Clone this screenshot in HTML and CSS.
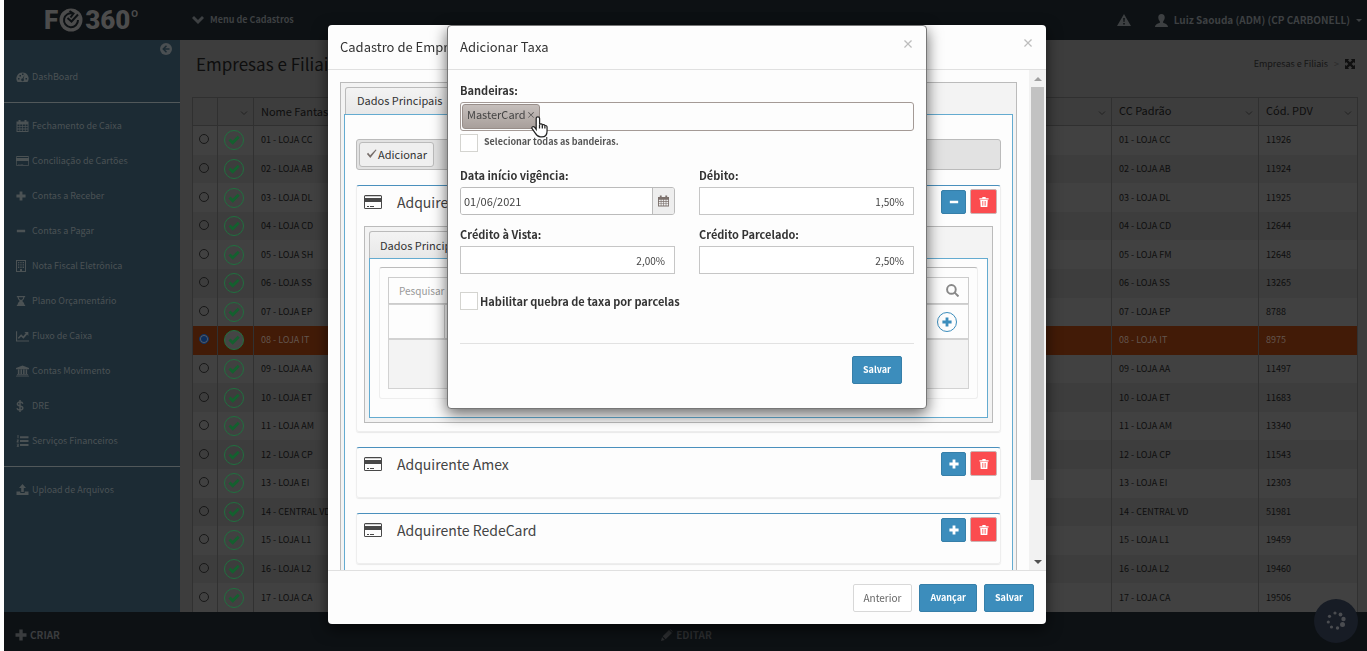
FILE: index.html
```html
<!DOCTYPE html>
<html lang="pt-BR">
<head>
<meta charset="utf-8">
<title>FC360º - Empresas e Filiais</title>
<link rel="stylesheet" href="styles.css">
</head>
<body>
<svg class="sprite" aria-hidden="true">
  <symbol id="i-card" viewBox="0 0 18 14"><path fill-rule="evenodd" d="M1.500 0h15A1.500 1.500 0 0 1 18 1.500v11a1.500 1.500 0 0 1-1.500 1.500h-15A1.500 1.500 0 0 1 0 12.500v-11A1.500 1.500 0 0 1 1.500 0zM1 1.300v1.700h16V1.300zM1 7v6h16V7zM3 11h2v1H3zm3 0h4v1H6z"/></symbol>
  <symbol id="i-plus" viewBox="0 0 12 12"><path d="M4.300.5h3.400v3.800h3.800v3.400H7.700v3.800H4.300V7.700H.5V4.300h3.800z"/></symbol>
  <symbol id="i-minus" viewBox="0 0 12 12"><path d="M1 4.500h10v3H1z"/></symbol>
  <symbol id="i-trash" viewBox="0 0 12 12"><path fill-rule="evenodd" d="M4 0h4v1.500h3.500V3H.5V1.500H4zM1.500 3.500h9L10 12H2zM3.800 4.800v5.700h.7V4.800zm1.900 0v5.700h.7V4.800zm1.900 0v5.700h.7V4.800z"/></symbol>
  <symbol id="i-check" viewBox="0 0 12 12"><path d="M.5 6.500 2.500 4.500l2.200 2.200L9.700 1.700l2 2-7 7z"/></symbol>
  <symbol id="i-calendar" viewBox="0 0 12 12"><path fill-rule="evenodd" d="M0 1.500h2V0h2v1.500h4V0h2v1.500h2V12H0zM1 4.500v1.700h2V4.500zm2.700 0v1.700h2V4.500zm2.700 0v1.700h2V4.500zm2.700 0v1.700h2V4.500zM1 7v1.600h2V7zm2.700 0v1.600h2V7zm2.700 0v1.600h2V7zm2.700 0v1.600h2V7zM1 9.400V11h2V9.400zm2.700 0V11h2V9.400zm2.700 0V11h2V9.400zm2.700 0V11h2V9.400z"/></symbol>
  <symbol id="i-chevron" viewBox="0 0 12 12"><path d="M0 4 2 2l4 4 4-4 2 2-6 6z"/></symbol>
  <symbol id="i-sort" viewBox="0 0 8 8"><path d="M1 2.500 4 5.500l3-3" fill="none" stroke="currentColor"/></symbol>
</svg>

<div class="shell">
  <header class="topbar">
    <a class="logo" href="#" aria-label="FC360º">
      <span>F</span>
      <svg class="logo-mark" viewBox="0 0 24 24"><circle cx="12" cy="12" r="11.500"/><path d="M14 5.500a7 7 0 1 0 5 6.500M8.500 10l4 3.500 6.500-7M10.500 3l4 2.500-3 4"/></svg>
      <span>360</span><span class="logo-degree">º</span>
    </a>
    <a class="menu-link" href="#"><svg class="icon"><use href="#i-chevron"/></svg>Menu de Cadastros</a>
    <div class="user">
      <svg class="icon alert" viewBox="0 0 14 12"><path fill-rule="evenodd" d="M7 0l7 12H0zM6.200 4h1.600l-.3 4h-1zM6.200 9h1.600v1.500H6.200z"/></svg>
      <a class="user-link" href="#"><svg class="icon" viewBox="0 0 12 12"><path d="M6 0c2 0 3 1.300 3 3.200C9 5 8 6 7.500 7v1c1 .7 4.500 1 4.500 4H0c0-3 3.500-3.300 4.500-4V7C4 6 3 5 3 3.200 3 1.300 4 0 6 0z"/></svg>Luiz Saouda (ADM) (CP CARBONELL)<span class="caret"></span></a>
    </div>
  </header>

  <div class="middle">
    <nav class="sidebar">
      <button class="collapse" aria-label="Recolher menu"><svg viewBox="0 0 12 12"><circle cx="6" cy="6" r="6"/><path d="M6.500 2.800 3.300 6l3.200 3.200M3.500 6h6"/></svg></button>
      <div class="nav-group first">
        <a href="#"><svg class="icon" viewBox="0 0 12 12"><path fill-rule="evenodd" d="M1 11A6 6 0 0 1 6 1.500 6 6 0 0 1 11 11zM1.500 7v1.500H3V7zM3 4v1.500h1.500V4zM5.500 2.500V4H7V2.500zM9 7v1.500h1.500V7zM8 4 6 7.500a1.300 1.300 0 1 0 1 .4z"/></svg>DashBoard</a>
      </div>
      <div class="nav-group">
        <a href="#"><svg class="icon"><use href="#i-calendar"/></svg>Fechamento de Caixa</a>
        <a href="#"><svg class="icon"><use href="#i-card"/></svg>Conciliação de Cartões</a>
        <a href="#"><svg class="icon small"><use href="#i-plus"/></svg>Contas a Receber</a>
        <a href="#"><svg class="icon small"><use href="#i-minus"/></svg>Contas a Pagar</a>
        <a href="#"><svg class="icon small" viewBox="0 0 10 12"><path fill-rule="evenodd" d="M0 0h10v12H0zM1 1v10h3V9h2v2h3V1zM2 2h1v1H2zm1.700 0h1v1h-1zm1.700 0h1v1h-1zM7 2h1v1H7zM2 3.700h1v1H2zm1.700 0h1v1h-1zm1.700 0h1v1h-1zm1.600 0h1v1H7zM2 5.400h1v1H2zm1.700 0h1v1h-1zm1.700 0h1v1h-1zm1.600 0h1v1H7zM2 7.100h1v1H2zm1.700 0h1v1h-1zm1.700 0h1v1h-1zm1.600 0h1v1H7z"/></svg>Nota Fiscal Eletrônica</a>
        <a href="#"><svg class="icon small" viewBox="0 0 12 12"><path fill-rule="evenodd" d="M1 0h10v1.500h-1C10 4 8.500 5 7.500 6c1 1 2.500 2 2.500 4.500h1V12H1v-1.500h1C2 8 3.500 7 4.500 6 3.500 5 2 4 2 1.500H1zM3.300 1.500C3.500 3 4 4 5 4.500h2c1-.5 1.500-1.500 1.700-3z"/></svg>Plano Orçamentário</a>
        <a href="#"><svg class="icon" viewBox="0 0 14 12"><path d="M0 1h1.200v9.800H14V12H0zM2 8l3.500-4 2.300 2.200L10.500 3 9 1.800h4.300V6L12 4.500 8 9 5.500 6.500 3 9.200z"/></svg>Fluxo de Caixa</a>
        <a href="#"><svg class="icon" viewBox="0 0 14 12"><path d="M7 0l7 2.800V4H0V2.800zM2 4.500h1.700v4.700H2zm2.800 0h1.700v4.700H4.800zm2.800 0h1.700v4.700H7.600zm2.800 0h1.600v4.700h-1.600zM1 9.500h12v1H1zM0 11h14v1H0z"/></svg>Contas Movimento</a>
        <a href="#"><svg class="icon tiny" viewBox="0 0 8 12"><path class="line" d="M4 0v12M6.800 3.700C6.500 2.500 5.500 2 4 2S1.400 2.700 1.400 4 2.500 5.700 4 6s2.800.8 2.800 2S5.500 10 4 10 1.300 9.300 1 8.200"/></svg>DRE</a>
        <a href="#"><svg class="icon" viewBox="0 0 12 12"><path d="M3.500 1.200H12v2H3.500zm0 3.900H12v2H3.500zm0 3.900H12v2H3.500zM1 0h1v3.200H1zM.3 4.400h1.900v1.800l-.9.600h.9v.8H.2V6l1-.7H.3zM.2 8.800h2V12h-2v-.8h1v-.4H.5V10h.7v-.4h-1z"/></svg>Serviços Financeiros</a>
      </div>
      <div class="nav-group">
        <a href="#"><svg class="icon" viewBox="0 0 12 12"><path d="M6 0l3.500 4H7.300v4H4.700V4H2.500zM0 7.500h3.800V9h4.400V7.500H12V11H0z"/></svg>Upload de Arquivos</a>
      </div>
    </nav>

    <main class="content">
      <div class="page-head">
        <h1>Empresas e Filiais</h1>
        <div class="crumb">Empresas e Filiais<span class="sep">&gt;</span><svg viewBox="0 0 12 12"><path d="M0 0h5L3.500 1.500 6 4l2.500-2.500L7 0h5v5l-1.500-1.500L8 6l2.500 2.500L12 7v5H7l1.500-1.500L6 8l-2.500 2.500L5 12H0V7l1.500 1.500L4 6 1.500 3.500 0 5z"/></svg></div>
      </div>
      <div class="grid-wrap">
        <table class="grid">
          <colgroup><col class="c-radio"><col class="c-status"><col class="c-name"><col><col class="c-cc"><col class="c-pdv"></colgroup>
          <thead><tr>
            <th></th>
            <th><svg class="sort"><use href="#i-sort"/></svg></th>
            <th>Nome Fantasia</th>
            <th><svg class="sort"><use href="#i-sort"/></svg></th>
            <th>CC Padrão<svg class="sort"><use href="#i-sort"/></svg></th>
            <th>Cód. PDV<svg class="sort"><use href="#i-sort"/></svg></th>
          </tr></thead>
          <tbody id="rows"></tbody>
        </table>
      </div>
    </main>
  </div>

  <footer class="bottombar">
    <button class="bar-btn"><svg class="icon"><use href="#i-plus"/></svg>CRIAR</button>
    <button class="bar-btn edit"><svg class="icon" viewBox="0 0 12 12"><path d="M0 12l1-4 2.800 3zM1.700 7.300 8 1l3 3-6.300 6.300zM8.700.4C9.500-.3 12.300 2.500 11.600 3.300z"/></svg>EDITAR</button>
  </footer>
</div>

<button class="bubble" aria-label="Carregando"><svg viewBox="0 0 20 20"><circle cx="9" cy="2" r="1.600"/><circle cx="14.500" cy="3.500" r="1.900"/><circle cx="17.500" cy="8" r="2.200"/><circle cx="16.500" cy="13.500" r="2.500"/><circle cx="11.500" cy="17" r="1.700"/><circle cx="5.500" cy="16" r="1.600"/><circle cx="2.300" cy="11" r="1.600"/><circle cx="3.500" cy="5.300" r="1.600"/></svg></button>

<div class="overlay">
  <section class="modal company" role="dialog" aria-label="Cadastro de Empresas">
    <header class="modal-head"><h2>Cadastro de Empresas</h2><button class="close" aria-label="Fechar">×</button></header>
    <div class="modal-body">
      <div class="scroll">
        <div class="tabs">
          <button class="tab">Dados Principais</button>
          <div class="tab-pane main-pane">
            <div class="toolbar"><button class="tool-btn"><svg class="icon" viewBox="0 0 12 12"><path d="M1 6.500 2.300 5.300 4.500 8 10.500 1.500l1 .8L4.700 11z"/></svg>Adicionar</button></div>
            <article class="box open">
              <div class="box-head"><svg class="card-icon"><use href="#i-card"/></svg><h3>Adquirente Cielo</h3><button class="sq blue" aria-label="Recolher"><svg><use href="#i-minus"/></svg></button><button class="sq red" aria-label="Excluir"><svg><use href="#i-trash"/></svg></button></div>
              <div class="tabs inner">
                <button class="tab">Dados Principais</button>
                <div class="tab-pane inner-pane">
                  <div class="list-card">
                    <div class="search-row"><input type="text" placeholder="Pesquisar por" aria-label="Pesquisar"><svg viewBox="0 0 12 12"><circle cx="5" cy="5" r="4"/><path d="M8 8l3.500 3.500"/></svg></div>
                    <div class="add-row"><span></span><button class="round" aria-label="Adicionar taxa"><svg><use href="#i-plus"/></svg></button></div>
                    <div class="empty-row"></div>
                  </div>
                </div>
              </div>
            </article>
            <article class="box">
              <div class="box-head"><svg class="card-icon"><use href="#i-card"/></svg><h3>Adquirente Amex</h3><button class="sq blue" aria-label="Expandir"><svg><use href="#i-plus"/></svg></button><button class="sq red" aria-label="Excluir"><svg><use href="#i-trash"/></svg></button></div>
            </article>
            <article class="box">
              <div class="box-head"><svg class="card-icon"><use href="#i-card"/></svg><h3>Adquirente RedeCard</h3><button class="sq blue" aria-label="Expandir"><svg><use href="#i-plus"/></svg></button><button class="sq red" aria-label="Excluir"><svg><use href="#i-trash"/></svg></button></div>
            </article>
          </div>
        </div>
      </div>
      <div class="scrollbar"><span class="arrow up"></span><span class="thumb"></span><span class="track"></span><span class="arrow down"></span></div>
    </div>
    <footer class="modal-foot"><button class="btn plain">Anterior</button><button class="btn">Avançar</button><button class="btn">Salvar</button></footer>
  </section>
</div>

<div class="overlay">
  <section class="modal rate" role="dialog" aria-label="Adicionar Taxa">
    <header class="modal-head"><h2>Adicionar Taxa</h2><button class="close" aria-label="Fechar">×</button></header>
    <form class="rate-form">
      <label for="flags">Bandeiras:</label>
      <div class="multi"><span class="tag">MasterCard<button type="button" aria-label="Remover MasterCard">×</button></span><input id="flags" type="text">
        <svg class="pointer" viewBox="0 0 18 24"><path d="M5.500 14.500V3a1.800 1.800 0 0 1 3.600 0v6.500c.5-1.300 2.900-1.200 3 .5.600-1 2.600-.7 2.700.8.700-.6 2.200-.2 2.200 1.200v4.500c0 3.500-1.500 6-5.500 6H10c-2.500 0-4-1.500-5.500-4L1 13.500c-.6-1.800 1.600-2.600 2.700-1.300z"/><path d="M9 10v3.500M12 10.500v3M14.700 11.500v2"/></svg>
      </div>
      <div class="check all"><input type="checkbox" id="all"><label for="all">Selecionar todas as bandeiras.</label></div>
      <div class="fields">
        <div class="field"><label for="date">Data início vigência:</label><div class="date"><input id="date" type="text" value="01/06/2021"><button type="button" aria-label="Abrir calendário"><svg><use href="#i-calendar"/></svg></button></div></div>
        <div class="field"><label for="debit">Débito:</label><input class="num" id="debit" type="text" value="1,50%"></div>
        <div class="field"><label for="cash">Crédito à Vista:</label><input class="num" id="cash" type="text" value="2,00%"></div>
        <div class="field"><label for="parc">Crédito Parcelado:</label><input class="num" id="parc" type="text" value="2,50%"></div>
      </div>
      <div class="check split"><input type="checkbox" id="split"><label for="split">Habilitar quebra de taxa por parcelas</label></div>
      <div class="actions"><button type="button" class="btn">Salvar</button></div>
    </form>
  </section>
</div>
<script src="app.js"></script>
</body>
</html>
```
FILE: styles.css
```css
* { box-sizing: border-box; }
body { margin: 0; background: #fdfdfd; font: 11px/16px "Noto Sans CJK SC", "Noto Sans", sans-serif; color: #333; overflow: hidden; }
h1, h2, h3 { margin: 0; font-weight: 400; }
button, input { font: inherit; color: inherit; margin: 0; }
button { padding: 0; background: none; border: 0; cursor: pointer; }
a { color: inherit; text-decoration: none; }
.sprite { position: absolute; width: 0; height: 0; }
.icon { width: 12px; height: 12px; fill: currentColor; flex: none; }

.shell { margin-left: 4px; height: 100vh; display: flex; flex-direction: column; background: #3d3d3d; }

.topbar { flex: none; height: 40px; background: #0d1114; color: #3d4042; display: flex; align-items: center; font-weight: 700; font-size: 9px; }
.logo { width: 176px; padding-left: 40px; display: flex; align-items: center; font: 900 26px/40px Roboto, sans-serif; color: #4c4c4c; }
.logo-mark { width: 24px; height: 24px; margin: 0 2px 0 1px; }
.logo-mark circle { fill: #4c4c4c; }
.logo-mark path { fill: none; stroke: #0d1114; stroke-width: 2; }
.logo-degree { font-size: 18px; font-weight: 500; line-height: 34px; align-self: flex-start; }
.menu-link { margin-left: 12px; display: flex; align-items: center; gap: 6px; }
.user { margin-left: auto; padding-right: 5px; display: flex; align-items: center; gap: 24px; }
.user-link { display: flex; align-items: center; gap: 6px; font-size: 10px; }
.user-link .icon { width: 13px; height: 13px; }
.alert { width: 14px; }
.caret { border: 3px solid transparent; border-top-color: currentColor; border-bottom: 0; }

.middle { flex: 1; min-height: 0; display: flex; }
.sidebar { flex: none; width: 176px; background: #1c2b34; color: #4b5254; font-size: 9px; position: relative; }
.collapse { position: absolute; right: 8px; top: 3px; width: 12px; height: 12px; }
.collapse svg { display: block; }
.collapse circle { fill: #4a4f52; }
.collapse path { fill: none; stroke: #1c2b34; stroke-width: 1.500; }
.nav-group { padding: 5px 0 8px; }
.nav-group + .nav-group { border-top: 1px solid #51585a; }
.nav-group.first { padding: 19px 0 8px; }
.nav-group a { height: 35px; padding-left: 12px; display: flex; align-items: center; gap: 3px; }
.nav-group .icon { width: 13px; }
.nav-group .icon.small { width: 10px; margin-right: 3px; }
.nav-group .icon.tiny { width: 8px; margin-right: 5px; }
.line { fill: none; stroke: currentColor; stroke-width: 1.500; }

.content { flex: 1; min-width: 0; display: flex; flex-direction: column; padding: 0 9px 0 12px; color: #0e0e0e; }
.page-head { flex: none; height: 57px; padding: 0 3px 10px 4px; display: flex; align-items: center; justify-content: space-between; }
.page-head h1 { font-size: 17px; line-height: 24px; }
.crumb { font-size: 9px; display: flex; align-items: center; color: #151515; }
.crumb svg { width: 10px; height: 10px; fill: #101010; }
.sep { margin: 0 6px; color: #2a2a2a; }
.grid-wrap { flex: 1; min-height: 0; }
.grid { width: 100%; height: 100%; table-layout: fixed; border-collapse: collapse; font-size: 9px; line-height: 12px; }
.c-radio { width: 25px; } .c-status { width: 36px; } .c-name { width: 320px; } .c-cc { width: 147px; } .c-pdv { width: 99px; }
.grid th { height: 28px; padding: 0 5px 2px 7px; font-size: 11px; font-weight: 400; text-align: left; border: 1px solid #303030; }
.grid td { padding: 0 0 0 7px; border: solid #313131; border-width: 0 1px; }
.grid tbody tr:nth-child(odd) { background: #414141; }
.grid tbody tr.selected { background: #421b07; color: #62564f; }
.sort { float: right; width: 8px; height: 8px; margin-top: 5px; color: #222; }
.grid input { appearance: none; display: block; width: 10px; height: 10px; margin: 0 0 2px -1px; border: 1px solid #181818; border-radius: 50%; }
.grid input:checked { border-color: #10366a; background: #0c2d5c; box-shadow: inset 0 0 0 1px #5a5a60; }
.grid td.status { padding-left: 6px; }
.ok { display: flex; width: 20px; height: 20px; border: 1px solid #20703f; border-radius: 50%; align-items: center; justify-content: center; }
.ok svg { width: 12px; height: 12px; fill: #14602f; }
.selected .ok { background: #454545; }

.bottombar { flex: none; height: 39px; padding: 6px 9px 0 11px; background: #0d1114; display: grid; grid-template-columns: 1fr auto 1fr; align-items: center; font-size: 10px; font-weight: 700; color: #3a3c3e; }
.bar-btn { justify-self: start; display: flex; align-items: center; gap: 3px; }
.bar-btn.edit { color: #2c2e30; }
.bubble { position: fixed; right: 9px; bottom: 8px; width: 44px; height: 44px; border-radius: 50%; background: #171c25; display: grid; place-items: center; }
.bubble svg { width: 20px; height: 20px; fill: #4a4c50; }

.overlay { position: fixed; inset: 0; padding: 25px 0 27px 7px; display: flex; justify-content: center; align-items: flex-start; }
.modal { background: #fdfdfd; border-radius: 4px; box-shadow: 0 5px 15px rgba(0, 0, 0, .6); display: flex; flex-direction: column; }
.company { width: 100%; max-width: 718px; height: 100%; }
.rate { width: 100%; max-width: 480px; border: 1px solid #777; }
.modal-head { flex: none; height: 45px; padding: 0 12px; border-bottom: 1px solid #e0e0e0; display: flex; justify-content: space-between; }
.modal-head h2 { font-size: 13px; line-height: 44px; white-space: nowrap; }
.rate .modal-head { height: 44px; }
.rate .modal-head h2 { line-height: 42px; }
.close { font-size: 12px; font-weight: 700; line-height: 16px; color: #bdbdbd; align-self: flex-start; padding-top: 10px; }
.modal-body { flex: 1; min-height: 0; display: flex; }
.scroll { flex: 1; overflow: hidden; padding: 12px 12px 0; }
.scrollbar { width: 17px; background: #f2f2f2; display: flex; flex-direction: column; align-items: center; }
.thumb { flex: 393; width: 13px; background: #c2c2c2; }
.track { flex: 73; }
.arrow { height: 17px; display: grid; place-items: center; }
.arrow::before { content: ""; border: 4px solid transparent; }
.up::before { border-top: 0; border-bottom-color: #a0a0a0; }
.down::before { border-bottom: 0; border-top-color: #505050; }

.tabs { border: 1px solid #bbb; background: #f3f3f3; padding: 4px 3px; }
.tab { height: 27px; padding: 0 11px 2px; margin-left: 1px; border: 1px solid #bbb; border-bottom: 0; border-radius: 3px 3px 0 0; background: linear-gradient(#f3f3f3, #e8e8e8); display: block; }
.tab-pane { border: 1px solid #64abd0; background: #fdfdfd; }
.main-pane { padding: 24px 11px 40px 11px; display: flex; flex-direction: column; gap: 15px; }
.toolbar { height: 31px; padding: 2px; background: #e2e2e2; border: 1px solid #bbb; border-radius: 3px; }
.tool-btn { height: 25px; padding: 0 6px 2px; background: #efefef; border: 1px solid #bbb; border-radius: 3px; display: flex; align-items: center; gap: 1px; }
.tool-btn .icon { width: 11px; height: 11px; fill: #776e6a; }
.box { min-height: 51px; padding: 3px 7px 0; border: 1px solid #eee; border-top-color: #4a90bd; border-radius: 3px; box-shadow: 0 1px 1px rgba(0, 0, 0, .08); }
.box.open { padding-bottom: 8px; }
.box-head { display: flex; align-items: center; height: 25px; margin-right: -4px; }
.box-head h3 { flex: 1; margin-left: 15px; font-size: 14px; line-height: 24px; color: #444; }
.card-icon { width: 18px; height: 14px; fill: #484848; }
.sq { width: 25px; height: 24px; border-radius: 2px; display: grid; place-items: center; }
.sq svg { width: 10px; height: 10px; fill: #fff; }
.sq.blue { background: #3c8dbc; border: 1px solid #367fa9; }
.sq.red { margin-left: 4px; width: 27px; height: 25px; background: #fb4c4f; border: 1px solid #ccb4b4; }
.inner { margin-top: 12px; padding: 4px; }
.inner .tab { margin-left: 0; padding: 0 10px; }
.inner-pane { padding: 8px 9px 18px; }
.list-card { padding: 9px 8px; border: 1px solid #eee; border-top-color: #bbb; border-radius: 3px; }
.search-row { height: 27px; border: 1px solid #ccc; display: flex; align-items: center; padding: 0 9px; }
.search-row input { flex: 1; border: 0; background: none; font-size: 10px; padding: 0 1px; }
.search-row input::placeholder { color: #999; }
.search-row svg { width: 13px; height: 13px; fill: none; stroke: #888; stroke-width: 1.800; }
.add-row { height: 35px; border: 1px solid #d2d2d2; display: flex; align-items: center; justify-content: space-between; padding-right: 11px; }
.add-row span { width: 56px; height: 100%; border-right: 1px solid #ccc; }
.round { width: 20px; height: 20px; border: 1px solid #3c8dbc; border-radius: 50%; display: grid; place-items: center; }
.round svg { width: 10px; height: 10px; fill: #3c8dbc; }
.empty-row { height: 50px; border: 1px solid #d2d2d2; background: #f3f3f3; }

.modal-foot { flex: none; height: 54px; padding: 0 12px; border-top: 1px solid #e0e0e0; display: flex; justify-content: flex-end; align-items: center; gap: 7px; }
.btn { height: 28px; padding: 0 10px; border: 1px solid #367fa9; border-radius: 2px; background: #3c8dbc; color: #fff; font-size: 9px; font-weight: 700; }
.btn.plain { background: #fff; color: #666; border-color: #d8d8d8; font-size: 10px; font-weight: 400; }

.rate-form { padding: 12px 12px 24px; font-size: 11px; }
.rate-form label { display: block; font-weight: 700; }
.multi { position: relative; height: 29px; margin-top: 4px; border: 1px solid #a49a96; border-radius: 3px; padding: 1px; display: flex; }
.multi > input { flex: 1; min-width: 0; border: 0; background: none; outline: 0; }
.tag { height: 25px; padding: 1px 3px 0 4px; border: 1px solid #988e8a; border-radius: 3px; background: linear-gradient(#c6bfbc, #a89f9b); color: #444; display: flex; align-items: flex-start; gap: 1px; }
.tag button { font-size: 9px; line-height: 18px; }
.pointer { position: absolute; left: 70px; top: 12px; width: 17px; height: 24px; fill: #fff; stroke: #222; stroke-width: 1.300; }
.check { display: flex; align-items: center; }
.check input { appearance: none; flex: none; width: 18px; height: 18px; border: 1px solid #d4d4d0; background: #fff; }
.check.all { margin-top: 3px; gap: 6px; align-items: flex-start; }
.check.all label { font-size: 9px; line-height: 16px; color: #555; }
.check.split { margin-top: 18px; gap: 2px; }
.fields { display: grid; grid-template-columns: 1fr 1fr; gap: 11px 24px; margin-top: 15px; }
.field input { display: block; width: 100%; height: 28px; padding: 0 9px; border: 1px solid #c6c6c6; background: #fff; color: #444; }
.field label { margin-bottom: 4px; }
.field .num { text-align: right; font-size: 10px; }
.date { display: flex; border: 1px solid #bbb; border-radius: 3px; overflow: hidden; }
.date input { flex: 1; min-width: 0; height: 26px; border: 0; padding: 0 3px; }
.date button { width: 22px; border-left: 1px solid #bbb; background: #eee; display: grid; place-items: center; }
.date svg { width: 11px; height: 12px; fill: #7b706c; }
.actions { margin-top: 33px; padding: 12px 12px 0; border-top: 1px solid #e2e2e2; display: flex; justify-content: flex-end; }
```
FILE: app.js
```js
const companies = [
  ["01 - LOJA CC", "11926"], ["02 - LOJA AB", "11924"], ["03 - LOJA DL", "11925"],
  ["04 - LOJA CD", "12644"], ["05 - LOJA SH", "05 - LOJA FM", "12648"], ["06 - LOJA SS", "13265"],
  ["07 - LOJA EP", "8788"], ["08 - LOJA IT", "8975"], ["09 - LOJA AA", "11497"],
  ["10 - LOJA ET", "11683"], ["11 - LOJA AM", "13340"], ["12 - LOJA CP", "11543"],
  ["13 - LOJA EI", "12303"], ["14 - CENTRAL VD", "51981"], ["15 - LOJA L1", "19459"],
  ["16 - LOJA L2", "19460"], ["17 - LOJA CA", "19506"]
];
const selected = 7;
document.getElementById("rows").innerHTML = companies.map((c, i) => `
  <tr class="${i === selected ? "selected" : ""}">
    <td><input type="radio" name="company" aria-label="${c[0]}"${i === selected ? " checked" : ""}></td>
    <td class="status"><span class="ok"><svg><use href="#i-check"/></svg></span></td>
    <td>${c[0]}</td><td></td><td>${c[c.length - 2]}</td><td>${c[c.length - 1]}</td>
  </tr>`).join("");
```
